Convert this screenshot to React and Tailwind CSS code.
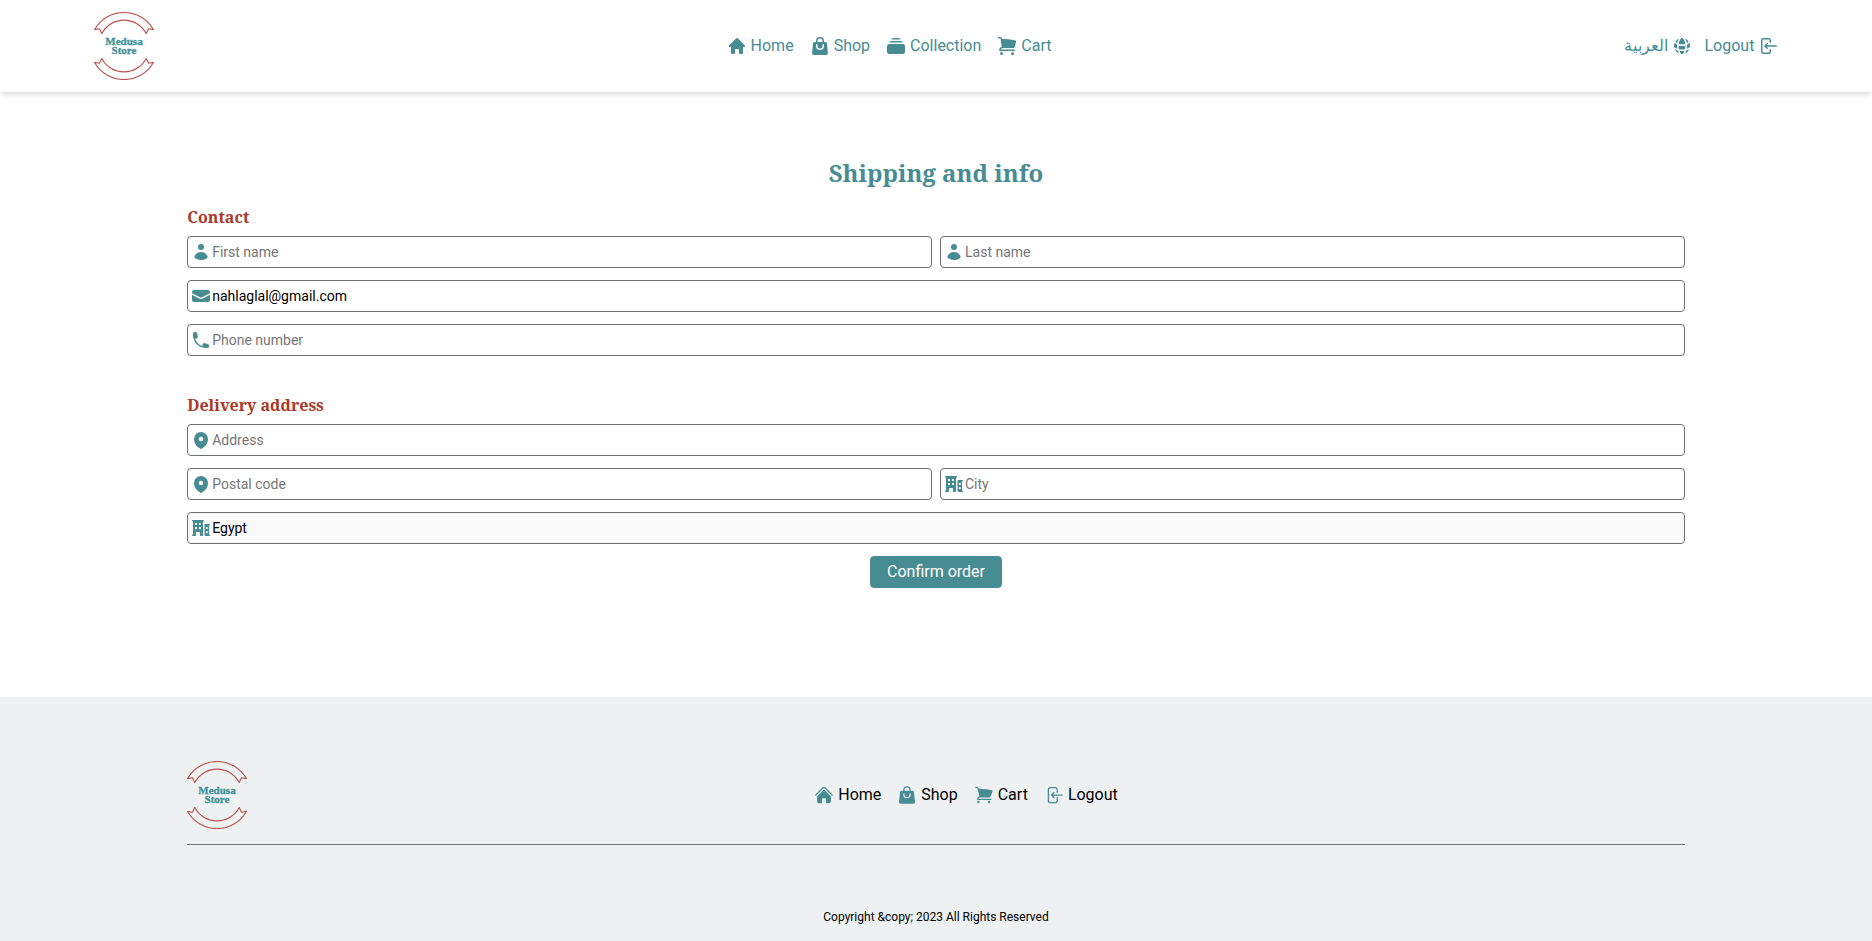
import {
  HiArrowLeftOnRectangle,
  HiHome,
  HiMiniArrowLeftOnRectangle,
  HiMiniBuildingOffice2,
  HiMiniEnvelope,
  HiMiniGlobeAlt,
  HiMiniHome,
  HiMiniMapPin,
  HiMiniPhone,
  HiMiniRectangleStack,
  HiMiniShoppingBag,
  HiMiniShoppingCart,
  HiMiniUser,
  HiShoppingBag,
  HiShoppingCart,
} from "react-icons/hi2";

function Logo() {
  return (
    <a href="#home" aria-label="Medusa Store" className="block shrink-0">
      <svg width="60" height="68" viewBox="0 0 60 68" fill="none">
        <g stroke="#b9524b" strokeWidth="1.1" strokeLinejoin="round">
          <path d="M0.6 17.6A33.8 33.8 0 0 1 59.4 17.6L54.6 16.8L52.2 21.6A25 25 0 0 0 7.8 21.6L5.4 16.8Z" />
          <path d="M0.6 50.4A33.8 33.8 0 0 0 59.4 50.4L54.6 51.2L52.2 46.4A25 25 0 0 1 7.8 46.4L5.4 51.2Z" />
        </g>
        <g
          fill="#3f9299"
          stroke="#3f9299"
          strokeWidth="0.3"
          textAnchor="middle"
          fontSize="11"
          fontWeight="700"
          fontFamily="'Liberation Serif', serif"
        >
          <text x="30" y="33">Medusa</text>
          <text x="30" y="42">Store</text>
        </g>
      </svg>
    </a>
  );
}

function NavLink({ icon: Icon, children }) {
  return (
    <a href="#" className="flex items-center gap-1">
      <Icon className="size-5 text-[#478c93]" />
      {children}
    </a>
  );
}

function Field({ icon: Icon, label, ...props }) {
  return (
    <div className="relative flex-1">
      <Icon className="absolute top-1.5 left-1 size-5 text-[#478c93]" />
      <input
        aria-label={label}
        placeholder={label}
        className="block h-8 w-full rounded-sm border border-[#6f6f6f] bg-white pr-2 pl-6 text-sm text-black placeholder:text-[#757575] disabled:bg-[#fafafa]"
        {...props}
      />
    </div>
  );
}

function Section({ title, children }) {
  return (
    <section>
      <h2 className="mb-1.5 font-['Noto_Serif',serif] text-base leading-[26px] font-bold text-[#ac3825]">
        {title}
      </h2>
      <div className="flex flex-col gap-3">{children}</div>
    </section>
  );
}

export default function App() {
  return (
    <div className="bg-white font-[Roboto,sans-serif] text-base text-black">
      <header className="relative flex items-center justify-between px-[5%] py-3 text-[#478c93] shadow-md">
        <Logo />
        <nav className="flex gap-4">
          <NavLink icon={HiMiniHome}>Home</NavLink>
          <NavLink icon={HiMiniShoppingBag}>Shop</NavLink>
          <NavLink icon={HiMiniRectangleStack}>Collection</NavLink>
          <NavLink icon={HiMiniShoppingCart}>Cart</NavLink>
        </nav>
        <div className="flex gap-3">
          <button type="button" className="flex items-center gap-1">
            <span lang="ar">العربية</span>
            <HiMiniGlobeAlt className="size-5" />
          </button>
          <button type="button" className="flex items-center gap-1">
            Logout
            <HiMiniArrowLeftOnRectangle className="size-5" />
          </button>
        </div>
      </header>

      <main className="px-[10%] pt-16 pb-[109px]">
        <h1 className="mb-3.5 text-center font-['Noto_Serif',serif] text-2xl leading-[34px] font-bold text-[#478c93]">
          Shipping and info
        </h1>
        <form>
          <div className="flex flex-col gap-9">
            <Section title="Contact">
              <div className="flex gap-2">
                <Field icon={HiMiniUser} label="First name" />
                <Field icon={HiMiniUser} label="Last name" />
              </div>
              <Field icon={HiMiniEnvelope} label="Email" type="email" defaultValue="nahlaglal@gmail.com" />
              <Field icon={HiMiniPhone} label="Phone number" type="tel" />
            </Section>
            <Section title="Delivery address">
              <Field icon={HiMiniMapPin} label="Address" />
              <div className="flex gap-2">
                <Field icon={HiMiniMapPin} label="Postal code" />
                <Field icon={HiMiniBuildingOffice2} label="City" />
              </div>
              <Field icon={HiMiniBuildingOffice2} label="Country" defaultValue="Egypt" disabled />
            </Section>
          </div>
          <button
            type="button"
            className="mx-auto mt-3 block h-8 rounded-sm border border-[#478c93] bg-[#478c93] px-4 text-white"
          >
            Confirm order
          </button>
        </form>
      </main>

      <footer className="bg-[#edf1f2] px-[10%] pt-16 pb-4">
        <div className="flex items-center border-b border-[#6f7478] pb-[15px]">
          <Logo />
          <nav className="flex flex-1 justify-center gap-4">
            <NavLink icon={HiHome}>Home</NavLink>
            <NavLink icon={HiShoppingBag}>Shop</NavLink>
            <NavLink icon={HiShoppingCart}>Cart</NavLink>
            <NavLink icon={HiArrowLeftOnRectangle}>Logout</NavLink>
          </nav>
        </div>
        <p className="mt-16 text-center text-xs">Copyright &amp;copy; 2023 All Rights Reserved</p>
      </footer>
    </div>
  );
}
